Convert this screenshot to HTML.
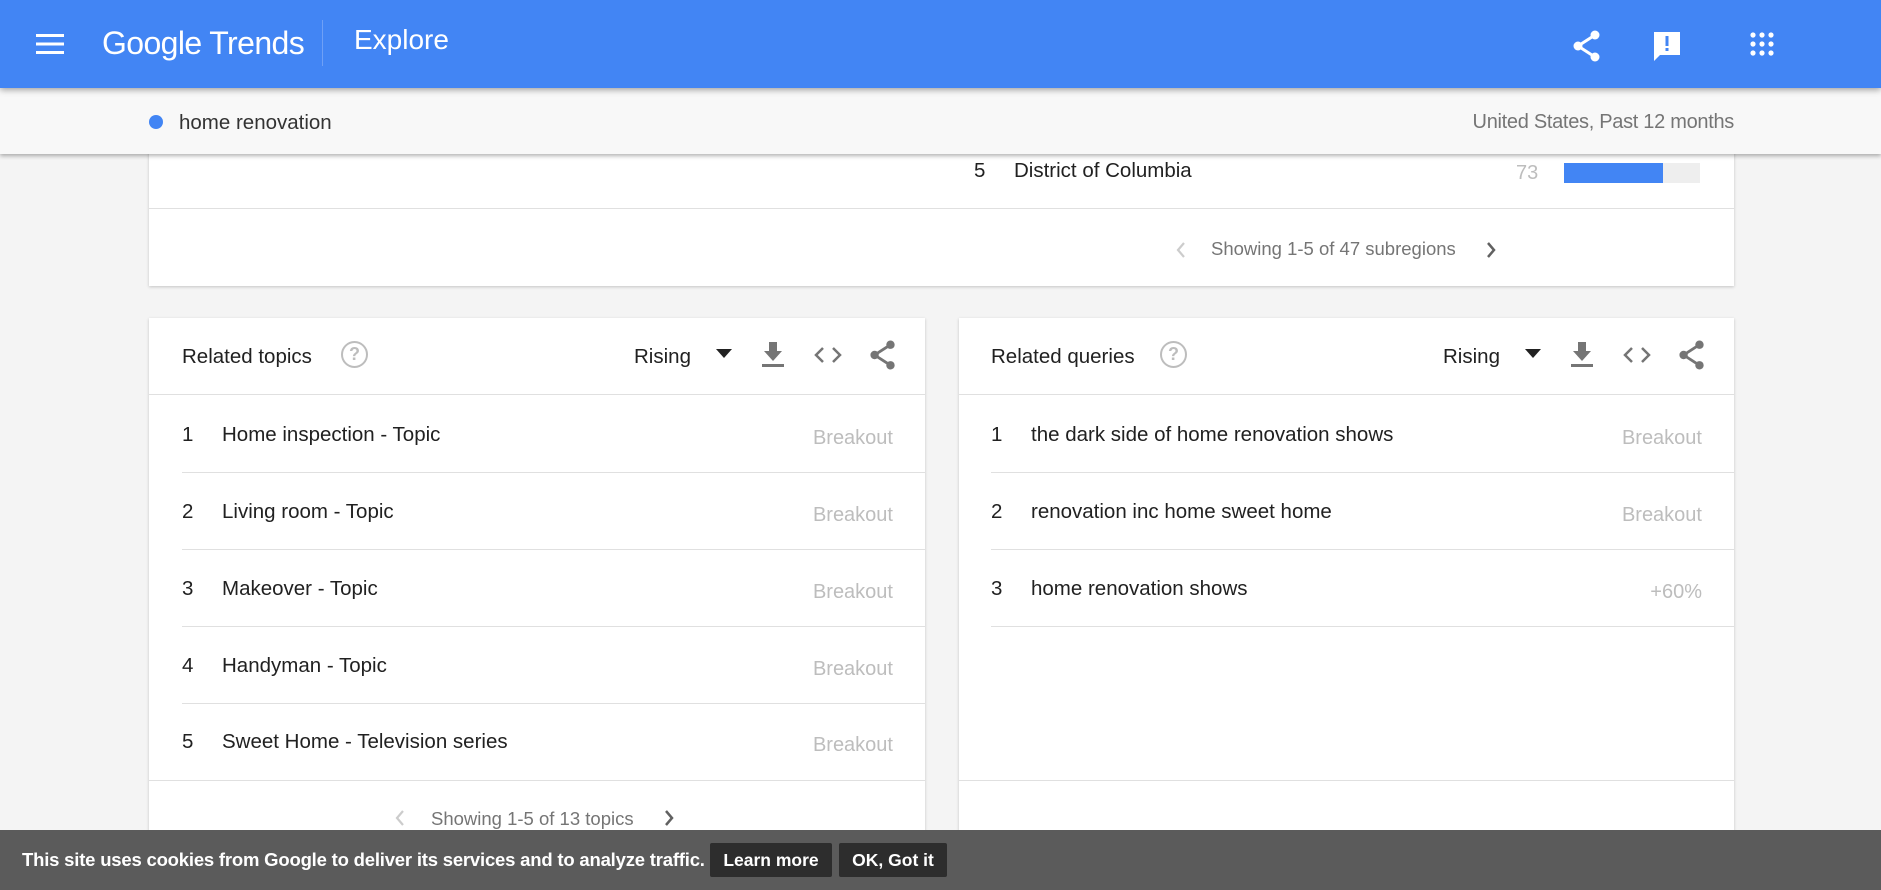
<!DOCTYPE html>
<html><head><meta charset="utf-8"><style>
*{margin:0;padding:0;box-sizing:border-box}
body{width:1881px;height:890px;overflow:hidden;background:#f4f4f4;font-family:"Liberation Sans",Arial,sans-serif;position:relative;color:#212121}
.a{position:absolute}
.hdr{left:0;top:0;width:1881px;height:88px;background:#4285f4;box-shadow:0 2px 6px rgba(0,0,0,.35);z-index:5}
.sub{left:0;top:88px;width:1881px;height:66px;background:#f8f8f8;box-shadow:0 2px 4px rgba(0,0,0,.3);z-index:4}
.card{background:#fff;box-shadow:0 1px 3px rgba(0,0,0,.2)}
.line{height:1px;background:#e0e0e0}
.row{font-size:20.5px;color:#212121;white-space:nowrap}
.bo{font-size:20px;color:#bdbdbd;text-align:right;width:120px}
.cookie{left:0;top:830px;width:1881px;height:60px;background:#5b5b5b;z-index:10}
</style></head><body>
<div class="a hdr">
  <svg class="a" style="left:36px;top:32px" width="28" height="24" viewBox="0 0 28 24"><rect y="2" width="28" height="3" fill="#fff"/><rect y="10.5" width="28" height="3" fill="#fff"/><rect y="19" width="28" height="3" fill="#fff"/></svg>
  <div class="a" style="left:102px;top:25px;font-size:32px;color:#fff;letter-spacing:-0.6px">Google Trends</div>
  <div class="a" style="left:322px;top:20px;width:1px;height:46px;background:#6fa0f6"></div>
  <div class="a" style="left:354px;top:24px;font-size:28px;color:#fff">Explore</div>
  <svg class="a" style="left:1572px;top:30px" width="30" height="32" viewBox="0 0 30 32"><circle cx="23" cy="5" r="4.5" fill="#fff"/><circle cx="6" cy="16" r="4.5" fill="#fff"/><circle cx="23" cy="27" r="4.5" fill="#fff"/><path d="M23 5L6 16L23 27" stroke="#fff" stroke-width="3" fill="none"/></svg>
  <svg class="a" style="left:1652px;top:31px" width="30" height="32" viewBox="0 0 30 32"><path d="M2 1h26v23H8l-6 6z" fill="#fff"/><rect x="13.5" y="5" width="3" height="10" fill="#4285f4"/><rect x="13.5" y="17" width="3" height="3" fill="#4285f4"/></svg>
  <svg class="a" style="left:1750px;top:32px" width="24" height="24" viewBox="0 0 24 24" fill="#fff"><circle cx="3" cy="3" r="2.6"/><circle cx="12" cy="3" r="2.6"/><circle cx="21" cy="3" r="2.6"/><circle cx="3" cy="12" r="2.6"/><circle cx="12" cy="12" r="2.6"/><circle cx="21" cy="12" r="2.6"/><circle cx="3" cy="21" r="2.6"/><circle cx="12" cy="21" r="2.6"/><circle cx="21" cy="21" r="2.6"/></svg>
</div>
<div class="a sub">
  <div class="a" style="left:149px;top:27px;width:14px;height:14px;border-radius:50%;background:#4285f4"></div>
  <div class="a" style="left:179px;top:23px;font-size:20.5px;color:#333">home renovation</div>
  <div class="a" style="right:147px;top:23px;font-size:20px;color:#757575;letter-spacing:-0.3px">United States, Past 12 months</div>
</div>

<div class="a card" style="left:149px;top:120px;width:1585px;height:166px">
  <div class="a row" style="left:825px;top:39px">5</div>
  <div class="a row" style="left:865px;top:39px">District of Columbia</div>
  <div class="a" style="left:1367px;top:42px;font-size:20px;color:#bdbdbd">73</div>
  <div class="a" style="left:1415px;top:43px;width:136px;height:20px;background:#eee"><div style="width:99px;height:20px;background:#4285f4"></div></div>
  <div class="a line" style="left:0;top:88px;width:1585px"></div>
  <svg class="a" style="left:1026px;top:120px" width="12" height="20"><path d="M9 3L3 10l6 7" stroke="#ccc" stroke-width="2.2" fill="none"/></svg>
  <div class="a" style="left:1062px;top:118px;font-size:18.5px;color:#757575">Showing 1-5 of 47 subregions</div>
  <svg class="a" style="left:1336px;top:120px" width="12" height="20"><path d="M3 3l6 7-6 7" stroke="#616161" stroke-width="2.5" fill="none"/></svg>
</div>

<div class="a card" style="left:149px;top:318px;width:776px;height:560px">
  <div class="a" style="left:33px;top:27px;font-size:20.5px;color:#212121">Related topics</div>
  <div class="a" style="left:192px;top:23px;width:27px;height:27px;border:2px solid #bdbdbd;border-radius:50%;color:#bdbdbd;font-size:18px;text-align:center;line-height:23px;font-weight:bold">?</div>
  <div class="a" style="left:485px;top:27px;font-size:20.5px">Rising</div>
  <svg class="a" style="left:567px;top:31px" width="16" height="10"><path d="M0 0h16L8 9z" fill="#212121"/></svg>
  <svg class="a" style="left:613px;top:24px" width="22" height="26" viewBox="0 0 22 26"><path d="M7 0h8v9h5l-9 10-9-10h5z" fill="#757575"/><rect y="22" width="22" height="3" fill="#757575"/></svg>
  <svg class="a" style="left:664px;top:28px" width="30" height="18" viewBox="0 0 30 18"><path d="M10 2L3 9l7 7M20 2l7 7-7 7" stroke="#757575" stroke-width="2.5" fill="none"/></svg>
  <svg class="a" style="left:720px;top:22px" width="28" height="30" viewBox="0 0 30 32"><circle cx="23" cy="5" r="4.5" fill="#757575"/><circle cx="6" cy="16" r="4.5" fill="#757575"/><circle cx="23" cy="27" r="4.5" fill="#757575"/><path d="M23 5L6 16L23 27" stroke="#757575" stroke-width="3" fill="none"/></svg>
  <div class="a line" style="left:0;top:76px;width:776px"></div>
  <div class="a row" style="left:33px;top:105px">1</div><div class="a row" style="left:73px;top:105px">Home inspection - Topic</div><div class="a bo" style="left:624px;top:109px">Breakout</div>
  <div class="a line" style="left:33px;top:154px;width:743px"></div>
  <div class="a row" style="left:33px;top:182px">2</div><div class="a row" style="left:73px;top:182px">Living room - Topic</div><div class="a bo" style="left:624px;top:186px">Breakout</div>
  <div class="a line" style="left:33px;top:231px;width:743px"></div>
  <div class="a row" style="left:33px;top:259px">3</div><div class="a row" style="left:73px;top:259px">Makeover - Topic</div><div class="a bo" style="left:624px;top:263px">Breakout</div>
  <div class="a line" style="left:33px;top:308px;width:743px"></div>
  <div class="a row" style="left:33px;top:336px">4</div><div class="a row" style="left:73px;top:336px">Handyman - Topic</div><div class="a bo" style="left:624px;top:340px">Breakout</div>
  <div class="a line" style="left:33px;top:385px;width:743px"></div>
  <div class="a row" style="left:33px;top:412px">5</div><div class="a row" style="left:73px;top:412px">Sweet Home - Television series</div><div class="a bo" style="left:624px;top:416px">Breakout</div>
  <div class="a line" style="left:0;top:462px;width:776px"></div>
  <svg class="a" style="left:245px;top:490px" width="12" height="20"><path d="M9 3L3 10l6 7" stroke="#ccc" stroke-width="2.2" fill="none"/></svg>
  <div class="a" style="left:282px;top:490px;font-size:18.5px;color:#757575">Showing 1-5 of 13 topics</div>
  <svg class="a" style="left:514px;top:490px" width="12" height="20"><path d="M3 3l6 7-6 7" stroke="#616161" stroke-width="2.5" fill="none"/></svg>
</div>

<div class="a card" style="left:959px;top:318px;width:775px;height:560px">
  <div class="a" style="left:32px;top:27px;font-size:20.5px;color:#212121">Related queries</div>
  <div class="a" style="left:201px;top:23px;width:27px;height:27px;border:2px solid #bdbdbd;border-radius:50%;color:#bdbdbd;font-size:18px;text-align:center;line-height:23px;font-weight:bold">?</div>
  <div class="a" style="left:484px;top:27px;font-size:20.5px">Rising</div>
  <svg class="a" style="left:566px;top:31px" width="16" height="10"><path d="M0 0h16L8 9z" fill="#212121"/></svg>
  <svg class="a" style="left:612px;top:24px" width="22" height="26" viewBox="0 0 22 26"><path d="M7 0h8v9h5l-9 10-9-10h5z" fill="#757575"/><rect y="22" width="22" height="3" fill="#757575"/></svg>
  <svg class="a" style="left:663px;top:28px" width="30" height="18" viewBox="0 0 30 18"><path d="M10 2L3 9l7 7M20 2l7 7-7 7" stroke="#757575" stroke-width="2.5" fill="none"/></svg>
  <svg class="a" style="left:719px;top:22px" width="28" height="30" viewBox="0 0 30 32"><circle cx="23" cy="5" r="4.5" fill="#757575"/><circle cx="6" cy="16" r="4.5" fill="#757575"/><circle cx="23" cy="27" r="4.5" fill="#757575"/><path d="M23 5L6 16L23 27" stroke="#757575" stroke-width="3" fill="none"/></svg>
  <div class="a line" style="left:0;top:76px;width:775px"></div>
  <div class="a row" style="left:32px;top:105px">1</div><div class="a row" style="left:72px;top:105px">the dark side of home renovation shows</div><div class="a bo" style="left:623px;top:109px">Breakout</div>
  <div class="a line" style="left:32px;top:154px;width:743px"></div>
  <div class="a row" style="left:32px;top:182px">2</div><div class="a row" style="left:72px;top:182px">renovation inc home sweet home</div><div class="a bo" style="left:623px;top:186px">Breakout</div>
  <div class="a line" style="left:32px;top:231px;width:743px"></div>
  <div class="a row" style="left:32px;top:259px">3</div><div class="a row" style="left:72px;top:259px">home renovation shows</div><div class="a bo" style="left:623px;top:263px">+60%</div>
  <div class="a line" style="left:32px;top:308px;width:743px"></div>
  <div class="a line" style="left:0;top:462px;width:775px"></div>
</div>

<div class="a cookie">
  <div class="a" style="left:22px;top:19px;font-size:18.5px;font-weight:bold;color:#fff;letter-spacing:-0.2px">This site uses cookies from Google to deliver its services and to analyze traffic.</div>
  <div class="a" style="left:710px;top:13px;width:122px;height:34px;background:#2d2d2d;border-radius:2px;color:#fff;font-weight:bold;font-size:17.5px;text-align:center;line-height:34px">Learn more</div>
  <div class="a" style="left:839px;top:13px;width:108px;height:34px;background:#2d2d2d;border-radius:2px;color:#fff;font-weight:bold;font-size:17.5px;text-align:center;line-height:34px">OK, Got it</div>
</div>
</body></html>
